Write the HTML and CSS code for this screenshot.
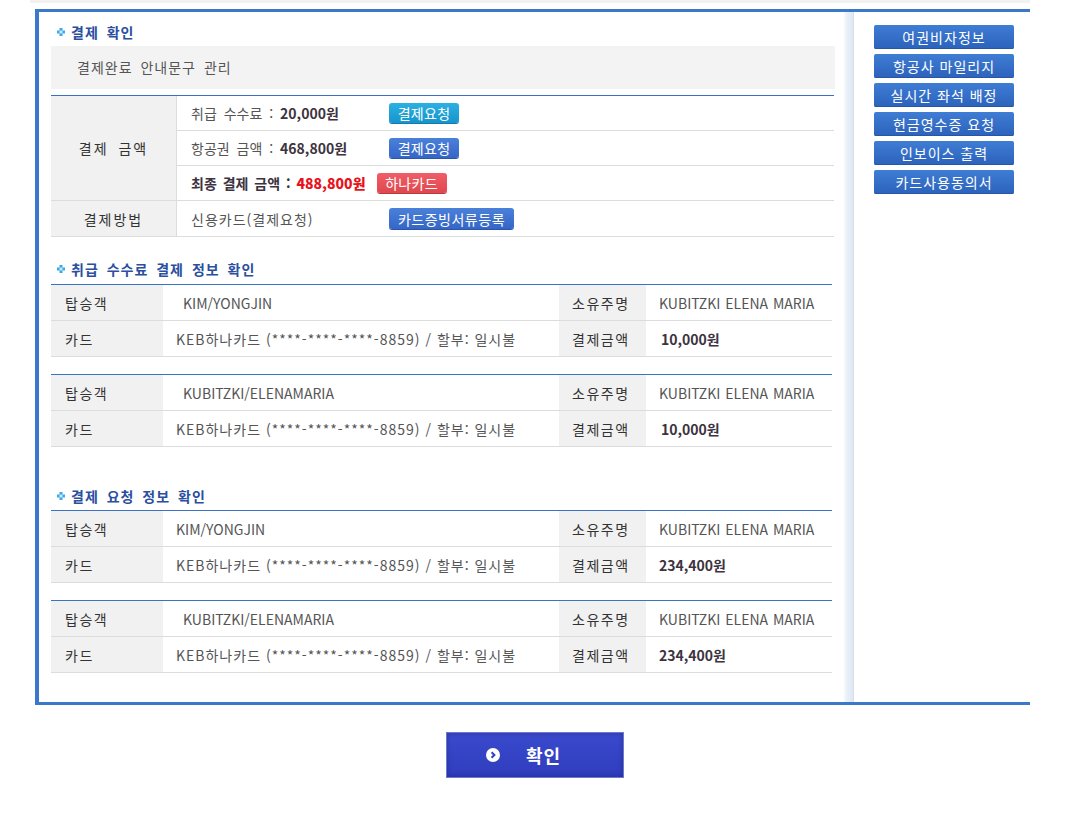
FILE: index.html
```html
<!DOCTYPE html>
<html lang="ko">
<head>
<meta charset="utf-8">
<title>결제 확인</title>
<link rel="stylesheet" href="styles.css">
</head>
<body>
<div class="page">
  <div class="topstrip"></div>
  <div class="frame">
    <div class="main">
      <h2 class="sec-title first"><svg class="sec-ico" width="8" height="8" viewBox="0 0 8 8"><rect x="2.5" y="0" width="3" height="3" fill="#3aa9e6"/><rect x="0" y="2.5" width="3" height="3" fill="#3aa9e6"/><rect x="5" y="2.5" width="3" height="3" fill="#3aa9e6"/><rect x="2.5" y="5" width="3" height="3" fill="#3aa9e6"/><rect x="2.5" y="2.5" width="3" height="3" fill="#c4e8fa"/></svg>결제 확인</h2>
      <div class="notice">결제완료 안내문구 관리</div>
      <div class="pay-table">
        <div class="pay-label span3">결제 금액</div>
        <div class="pay-cell"><span class="amt-label">취급 수수료 : <b class="amt">20,000원</b></span><span class="btn btn-cyan">결제요청</span></div>
        <div class="pay-cell"><span class="amt-label">항공권 금액 : <b class="amt">468,800원</b></span><span class="btn btn-blue">결제요청</span></div>
        <div class="pay-cell"><span class="final">최종 결제 금액 : <b class="red">488,800원</b></span><span class="btn btn-red">하나카드</span></div>
        <div class="pay-label">결제방법</div>
        <div class="pay-cell last"><span class="amt-label ko">신용카드(결제요청)</span><span class="btn btn-blue wide">카드증빙서류등록</span></div>
      </div>

      <h2 class="sec-title second"><svg class="sec-ico" width="8" height="8" viewBox="0 0 8 8"><rect x="2.5" y="0" width="3" height="3" fill="#3aa9e6"/><rect x="0" y="2.5" width="3" height="3" fill="#3aa9e6"/><rect x="5" y="2.5" width="3" height="3" fill="#3aa9e6"/><rect x="2.5" y="5" width="3" height="3" fill="#3aa9e6"/><rect x="2.5" y="2.5" width="3" height="3" fill="#c4e8fa"/></svg>취급 수수료 결제 정보 확인</h2>
      <div class="info-table">
        <div class="row"><div class="th">탑승객</div><div class="td latin indent">KIM/YONGJIN</div><div class="th">소유주명</div><div class="td latin">KUBITZKI ELENA MARIA</div></div>
        <div class="row"><div class="th">카드</div><div class="td card">KEB하나카드 (****-****-****-8859) / 할부: 일시불</div><div class="th">결제금액</div><div class="td money shift">10,000원</div></div>
      </div>
      <div class="info-table gap">
        <div class="row"><div class="th">탑승객</div><div class="td latin indent">KUBITZKI/ELENAMARIA</div><div class="th">소유주명</div><div class="td latin">KUBITZKI ELENA MARIA</div></div>
        <div class="row"><div class="th">카드</div><div class="td card">KEB하나카드 (****-****-****-8859) / 할부: 일시불</div><div class="th">결제금액</div><div class="td money shift">10,000원</div></div>
      </div>

      <h2 class="sec-title third"><svg class="sec-ico" width="8" height="8" viewBox="0 0 8 8"><rect x="2.5" y="0" width="3" height="3" fill="#3aa9e6"/><rect x="0" y="2.5" width="3" height="3" fill="#3aa9e6"/><rect x="5" y="2.5" width="3" height="3" fill="#3aa9e6"/><rect x="2.5" y="5" width="3" height="3" fill="#3aa9e6"/><rect x="2.5" y="2.5" width="3" height="3" fill="#c4e8fa"/></svg>결제 요청 정보 확인</h2>
      <div class="info-table">
        <div class="row"><div class="th">탑승객</div><div class="td latin">KIM/YONGJIN</div><div class="th">소유주명</div><div class="td latin">KUBITZKI ELENA MARIA</div></div>
        <div class="row"><div class="th">카드</div><div class="td card">KEB하나카드 (****-****-****-8859) / 할부: 일시불</div><div class="th">결제금액</div><div class="td money">234,400원</div></div>
      </div>
      <div class="info-table gap">
        <div class="row"><div class="th">탑승객</div><div class="td latin indent">KUBITZKI/ELENAMARIA</div><div class="th">소유주명</div><div class="td latin">KUBITZKI ELENA MARIA</div></div>
        <div class="row"><div class="th">카드</div><div class="td card">KEB하나카드 (****-****-****-8859) / 할부: 일시불</div><div class="th">결제금액</div><div class="td money">234,400원</div></div>
      </div>
    </div>
    <div class="sep"></div>
    <div class="side">
      <a class="side-btn">여권비자정보</a>
      <a class="side-btn">항공사 마일리지</a>
      <a class="side-btn">실시간 좌석 배정</a>
      <a class="side-btn">현금영수증 요청</a>
      <a class="side-btn">인보이스 출력</a>
      <a class="side-btn">카드사용동의서</a>
    </div>
  </div>
  <div class="confirm-wrap">
    <a class="confirm"><svg class="confirm-ico" width="14" height="14" viewBox="0 0 14 14"><circle cx="7" cy="7" r="7" fill="#fff"/><path d="M5.6 4.2 L8.4 7 L5.6 9.8" fill="none" stroke="#2f3fbf" stroke-width="2"/></svg><span>확인</span></a>
  </div>
</div>
</body>
</html>
```

FILE: styles.css
```css
* { box-sizing: border-box; }
html, body { margin: 0; padding: 0; background: #fff; }
body {
  font-family: "Noto Sans CJK KR", "Noto Sans", sans-serif;
  font-size: 14px;
  color: #555;
  word-spacing: 3px;
}
.page {
  width: 1065px;
  padding-left: 35px;
}
.topstrip {
  width: 1000px;
  margin-left: -5px;
  height: 3px;
  background: #f2f2f2;
}
.frame {
  margin-top: 6px;
  width: 995px;
  height: 696px;
  border-top: 3px solid #3a78c9;
  border-left: 4px solid #3a78c9;
  border-bottom: 3px solid #3a78c9;
  display: flex;
}
.main {
  width: 805px;
  padding-left: 12px;
}
.sep {
  width: 10px;
  background: linear-gradient(to right, #f7fafd 0, #e9f0f8 30%, #dfe8f3 85%, #cfdcec 100%);
}
.side {
  flex: 1;
  padding: 13px 0 0 20px;
  display: flex;
  flex-direction: column;
  gap: 5px;
}
.side-btn {
  display: flex;
  align-items: center;
  justify-content: center;
  width: 140px;
  height: 24px;
  border-radius: 2px;
  background: linear-gradient(#3f7dd4, #2c62bb);
  box-shadow: inset 0 -1px 0 #2756a6;
  color: #fff;
  font-size: 14px;
  line-height: 16px;
  letter-spacing: 1px;
  word-spacing: 0;
}

/* section titles */
.sec-title {
  margin: 0;
  display: flex;
  align-items: flex-end;
  font-size: 14px;
  line-height: 16px;
  font-weight: bold;
  color: #2b4f9e;
  letter-spacing: 1px;
  word-spacing: 3px;
}
.sec-ico { margin: 0 6px 4px 6px; flex: none; }
.sec-title.first { height: 34px; padding-bottom: 6px; }
.sec-title.second { height: 47px; padding-bottom: 7px; }
.sec-title.third { height: 63px; padding-bottom: 6px; }

.notice {
  width: 784px;
  height: 43px;
  background: #f3f3f3;
  padding-left: 26px;
  display: flex;
  align-items: center;
  color: #555;
  letter-spacing: 1px;
  word-spacing: 3px;
  padding-bottom: 1px;
}

/* payment table */
.pay-table {
  margin-top: 6px;
  width: 783px;
  border-top: 1px solid #3a6fc2;
  display: grid;
  grid-template-columns: 126px 1fr;
  grid-template-rows: 35px 35px 35px 36px;
}
.pay-label {
  background: #f1f1f1;
  border-right: 1px solid #dcdcdc;
  border-bottom: 1px solid #dcdcdc;
  display: flex;
  align-items: center;
  justify-content: center;
  color: #333;
  letter-spacing: 2px;
  word-spacing: 4px;
}
.pay-label.span3 { grid-row: span 3; }
.pay-cell {
  border-bottom: 1px solid #dcdcdc;
  display: flex;
  align-items: center;
  padding-left: 14px;
  color: #555;
}
.amt-label { display: inline-block; width: 198px; }
.ko { letter-spacing: 1px; word-spacing: 0; }
.amt { color: #3d3340; font-weight: bold; word-spacing: 0; }
.final { color: #3d3340; font-weight: bold; margin-right: 11px; word-spacing: 2px; }
.red { color: #e8121c; }
.btn {
  display: inline-flex;
  align-items: center;
  justify-content: center;
  width: 70px;
  height: 20px;
  border-radius: 3px;
  color: #fff;
  font-size: 14px;
  line-height: 16px;
  word-spacing: 0;
  letter-spacing: 0.3px;
}
.btn.wide { width: 125px; height: 21px; letter-spacing: 0.5px; }
.btn-cyan { background: linear-gradient(#2cb0e2, #1595cc); box-shadow: 0 1px 0 #1579ab; }
.btn-blue { background: linear-gradient(#4a80da, #3566c6); box-shadow: 0 1px 0 #2a55a8; }
.btn-red { background: linear-gradient(#f05e67, #e0474f); box-shadow: 0 1px 0 #b83840; }

/* info tables */
.info-table {
  width: 781px;
  border-top: 1px solid #3a72c4;
}
.info-table.gap { margin-top: 17px; }
.row {
  display: grid;
  grid-template-columns: 112px 396px 87px 186px;
  height: 36px;
  border-bottom: 1px solid #dcdcdc;
}
.th {
  background: #f1f1f1;
  color: #333;
  display: flex;
  align-items: center;
  padding-left: 14px;
  letter-spacing: 1.5px;
  word-spacing: 0;
}
.row .th:nth-child(3) { padding-left: 13px; }
.td {
  display: flex;
  align-items: center;
  padding-left: 13px;
  color: #555;
  white-space: nowrap;
}
.td.latin { letter-spacing: 0; word-spacing: 1px; }
.td.card { letter-spacing: 1px; word-spacing: 0; }
.td.indent { padding-left: 20px; }
.money { color: #3d3340; font-weight: bold; word-spacing: 0; }
.money.shift { padding-left: 15px; }

/* confirm */
.confirm-wrap {
  padding: 27px 0 0 411px;
}
.confirm {
  display: flex;
  align-items: center;
  width: 178px;
  height: 46px;
  padding-left: 39px;
  gap: 26px;
  background: linear-gradient(#3a4acd, #2f3dbd);
  border: 1px solid #7078c8;
  box-shadow: inset 0 0 5px rgba(10, 15, 90, 0.35);
  color: #fff;
  font-size: 18px;
  font-weight: bold;
  line-height: 20px;
  letter-spacing: 1px;
}
.confirm-ico { flex: none; }
```
